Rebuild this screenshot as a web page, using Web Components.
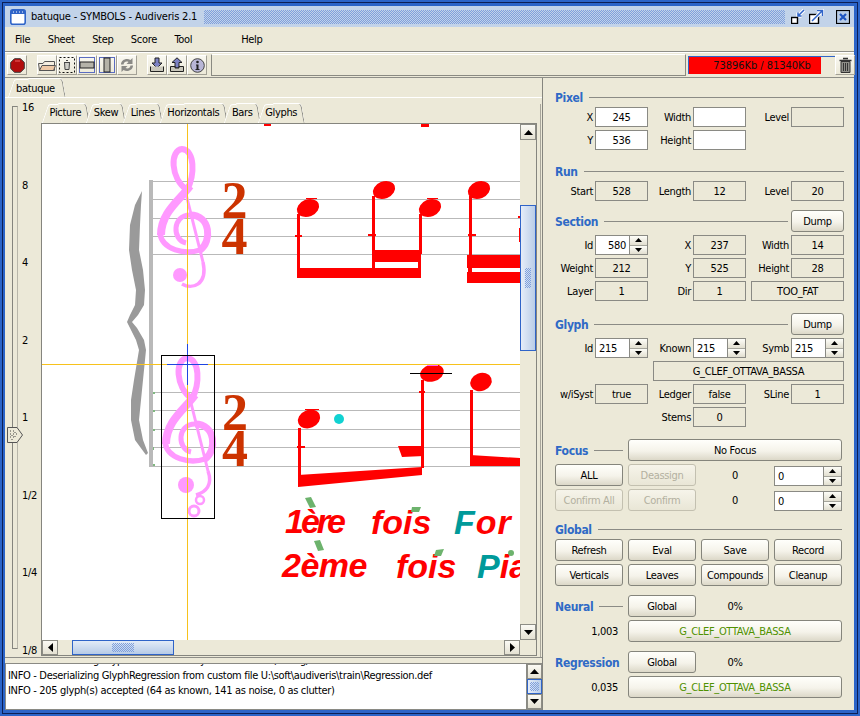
<!doctype html>
<html>
<head>
<meta charset="utf-8">
<title>batuque - SYMBOLS - Audiveris 2.1</title>
<style>
  html, body { margin: 0; height: 100%; overflow: hidden; }
  body { font: 11px "DejaVu Sans Condensed", "DejaVu Sans", sans-serif; font-stretch: condensed; letter-spacing: -0.33px; color: #000; }
</style>
</head>
<body>
<aud-window></aud-window>

<script>
/* Audiveris main window, Swing/XP look. Everything is a small custom element. */

const CHECKER = `conic-gradient(#7f9fdc 25%, transparent 0 50%, #7f9fdc 0 75%, transparent 0)`;

function define(name, css, html) {
  customElements.define(name, class extends HTMLElement {
    constructor() {
      super();
      this.attachShadow({ mode: "open" }).innerHTML = `<style>${css}</style>${html}`;
    }
  });
}

/* ---- small atoms ---- */

define("aud-label", `
  :host { display: flex; align-items: center; justify-content: flex-end; padding-right: 2px; white-space: nowrap; }
`, `<slot></slot>`);

define("aud-field", `
  :host { display: flex; align-items: center; justify-content: center; height: 20px;
    box-sizing: border-box; border: 1px solid #8a8a84; white-space: nowrap; }
  :host([edit]) { background: #fff; }
`, `<slot></slot>`);

define("aud-spin", `
  :host { display: flex; height: 20px; box-sizing: border-box; border: 1px solid #8a8a84; background: #fff; }
  .v { flex: 1; display: flex; align-items: center; padding: 0 3px; }
  :host([right]) .v { justify-content: flex-end; }
  .b { width: 17px; display: flex; flex-direction: column; border-left: 1px solid #8a8a84; }
  .b i { flex: 1; display: flex; align-items: center; justify-content: center;
    background: linear-gradient(#fdfdf8, #e2dfd0); }
  .b i + i { border-top: 1px solid #a5a59c; }
  svg { display: block; }
`, `<div class="v"><slot></slot></div>
  <div class="b">
    <i><svg width="7" height="4"><path d="M3.5 0L7 4H0z"/></svg></i>
    <i><svg width="7" height="4"><path d="M0 0H7L3.5 4z"/></svg></i>
  </div>`);

define("aud-btn", `
  :host { display: flex; align-items: center; justify-content: center; height: 22px; box-sizing: border-box;
    border: 1px solid #85857c; border-radius: 3px; white-space: nowrap;
    background: linear-gradient(#fffffb 0%, #f5f3ea 55%, #dcd8c8 100%); }
  :host([off]) { color: #b3b09f; border-color: #c3c0b0; background: linear-gradient(#f6f4ea, #e9e6d6); }
  :host([guess]) { color: #4f9100; }
`, `<slot></slot>`);

define("aud-title", `
  :host { display: flex; align-items: center; gap: 6px; min-height: 20px; white-space: nowrap;
    color: #2f6ac6; font-weight: bold; font-size: 12px; }
  span { padding-top: 2px; }
  i { flex: 1; height: 1px; background: #8b8b85; }
  :host([bare]) i { display: none; }
`, `<span><slot></slot></span><i></i>`);

/* ---- scrollbars ---- */

const ARROWS = {
  v: ['<svg width="9" height="5"><path d="M4.5 0L9 5H0z"/></svg>', '<svg width="9" height="5"><path d="M0 0H9L4.5 5z"/></svg>'],
  h: ['<svg width="5" height="9"><path d="M5 0V9L0 4.500z"/></svg>', '<svg width="5" height="9"><path d="M0 0L5 4.500 0 9z"/></svg>'],
};

customElements.define("aud-scrollbar", class extends HTMLElement {
  constructor() {
    super();
    const [a, b] = ARROWS[this.getAttribute("orient")];
    this.attachShadow({ mode: "open" }).innerHTML = `<style>
      :host { display: flex; background: #ece9d8; box-sizing: border-box; }
      :host([orient="v"]) { flex-direction: column; }
      .btn { flex: none; display: flex; align-items: center; justify-content: center;
        box-sizing: border-box; border: 1px solid #8d8d85;
        background: linear-gradient(#fbfaf4, #e4e1d2); }
      :host([orient="v"]) .btn { height: var(--btn, 16px); }
      :host([orient="h"]) .btn { width: 16px; }
      .pad { flex: none; flex-basis: var(--before, 0); }
      .rest { flex: 1; }
      .thumb { flex: none; flex-basis: var(--thumb, 20px); box-sizing: border-box; border: 1px solid #2f64c8;
        display: flex; align-items: center; justify-content: center;
        background: linear-gradient(90deg, #e6edf8, #b9cde8); }
      :host([orient="h"]) .thumb { background: linear-gradient(#e3ebf7, #b6cbe7); }
      .dots { background-image: ${CHECKER}; background-size: 2px 2px; }
      :host([orient="h"]) .dots { width: 22px; height: 9px; }
      :host([orient="v"]) .dots { width: 6px; height: 20px; }
      :host([small]) .dots { width: 9px; height: 9px; }
      svg { display: block; }
    </style>
    <div class="btn">${a}</div><div class="pad"></div>
    <div class="thumb"><div class="dots"></div></div>
    <div class="rest"></div><div class="btn">${b}</div>`;
  }
});

/* ---- title bar ---- */

define("aud-titlebar", `
  :host { display: flex; align-items: center; height: 21px; background: #c2d3e9; padding: 0 4px 0 5px; }
  .ico { margin-right: 5px; display: block; }
  .txt { white-space: nowrap; letter-spacing: -0.2px; }
  .dither { flex: 1; height: 14px; margin: 0 6px 0 7px; background-image: ${CHECKER}; background-size: 2px 2px; }
  .ctl { display: flex; align-items: center; }
  svg { display: block; }
`, `
  <svg class="ico" width="16" height="16" viewBox="0 0 16 16">
    <rect x="0.800" y="0.800" width="14.400" height="14.400" rx="2" fill="#fff" stroke="#2f64c8" stroke-width="1.600"/>
    <rect x="1" y="1" width="14" height="4" fill="#2f64c8"/>
    <path d="M3 3h1M6 3h1M9 3h1M12 3h1" stroke="#fff"/>
  </svg>
  <span class="txt">batuque - SYMBOLS - Audiveris 2.1</span>
  <div class="dither"></div>
  <div class="ctl">
    <svg width="14" height="15" viewBox="0 0 14 15">
      <path d="M13 1L7 7M7 3.500V7H10.500" fill="none" stroke="#fff" stroke-width="3.500"/>
      <path d="M13 1L7 7M7 3.500V7H10.500" fill="none" stroke="#2f64c8" stroke-width="1.500"/>
      <rect x="0.500" y="8.500" width="6" height="6" fill="#fff" stroke="#000" stroke-width="1.400"/>
    </svg>
    <svg style="margin-left:4px" width="15" height="15" viewBox="0 0 15 15">
      <rect x="0.500" y="5.500" width="9" height="9" fill="#fff" stroke="#000" stroke-width="1.400"/>
      <path d="M3 12L13 2M8 1.500H13.500V7" fill="none" stroke="#fff" stroke-width="3.500"/>
      <path d="M3 12L13 2M8 1.500H13.500V7" fill="none" stroke="#2f64c8" stroke-width="1.500"/>
    </svg>
    <svg style="margin-left:12px" width="14" height="14" viewBox="0 0 14 14">
      <rect x="0.500" y="0.500" width="13" height="13" fill="#b8cce6" stroke="#000" stroke-width="1.200"/>
      <path d="M4 4L10 10M10 4L4 10" stroke="#1f55c0" stroke-width="2.200"/>
    </svg>
  </div>`);

/* ---- menu bar ---- */

define("aud-menubar", `
  :host { display: flex; align-items: center; height: 25px; box-sizing: border-box; background: #ece9d8;
    border-bottom: 1px solid #8e8e88; padding-left: 10px; }
  span { margin-right: 17.500px; }
  .help { margin-left: 31.500px; }
`, `<span>File</span><span>Sheet</span><span>Step</span><span>Score</span><span>Tool</span><span class="help">Help</span>`);

/* ---- tool bar ---- */

define("aud-toolbtn", `
  :host { display: flex; flex: none; align-items: center; justify-content: center; width: 20px; height: 20px; box-sizing: border-box;
    background: linear-gradient(#f9f8f1, #ece9d8); border: 1px solid; border-color: #fff #a3a196 #a3a196 #fff; }
  ::slotted(svg) { display: block; }
`, `<slot></slot>`);

define("aud-memory", `
  :host { flex: none; width: 147px; height: 18px; box-sizing: border-box; display: block; position: relative;
    border: solid #2f64c8; border-width: 1px 0 0 1px; background: #ece9d8; }
  .fill { height: 100%; width: 132px; background: #ff0000; }
  .txt { position: absolute; inset: 0; display: flex; align-items: center; justify-content: center; color: #111; letter-spacing: -0.05px; }
`, `<div class="fill"></div><div class="txt">73896Kb / 81340Kb</div>`);

define("aud-toolbar", `
  :host { display: flex; align-items: center; height: 24px; background: #ece9d8; padding-left: 2px;
    border-bottom: 1px solid #8e8e88; border-top: 1px solid #fff; }
  .g { display: flex; }
  .blank { flex: 1; height: 22px; margin: 0 2px 0 4px; box-sizing: border-box; border: 1px solid;
    border-color: #fff #8a8a82 #8a8a82 #8a8a82; }
`, `
  <div class="g">
    <aud-toolbtn><svg width="15" height="15" viewBox="0 0 15 15"><path d="M4.500 0.700H10.500L14.300 4.500V10.500L10.500 14.300H4.500L0.700 10.500V4.500z" fill="#b30d0d" stroke="#3a3a3a"/><path d="M5 3H10" stroke="#e66" /></svg></aud-toolbtn>
  </div>
  <div class="g" style="margin-left:10px">
    <aud-toolbtn><svg width="18" height="14" viewBox="0 0 18 14"><path d="M1.500 12.500L0.500 5.500H5L6.500 3.500H16.500V12.500z" fill="#f5eee0" stroke="#555"/><path d="M1.500 12.500L4 7.500H17.500L15.500 12.500z" fill="#efc9a6" stroke="#555"/></svg></aud-toolbtn>
    <aud-toolbtn><svg width="16" height="16" viewBox="0 0 16 16"><rect x="0.500" y="0.500" width="15" height="15" fill="none" stroke="#111" stroke-dasharray="2 2"/><path d="M5 5.500H11M5.500 5.500L6 12.500H10L10.500 5.500M7 3.500H9" fill="#cfcfc8" stroke="#444"/></svg></aud-toolbtn>
    <aud-toolbtn><svg width="16" height="16" viewBox="0 0 16 16"><rect x="0.500" y="0.500" width="15" height="15" fill="none" stroke="#5a6cc0"/><rect x="1" y="5" width="14" height="6" fill="#b5b3a8" stroke="#222"/></svg></aud-toolbtn>
    <aud-toolbtn><svg width="16" height="16" viewBox="0 0 16 16"><rect x="0.500" y="0.500" width="15" height="15" fill="none" stroke="#5a6cc0"/><rect x="5" y="1" width="6" height="14" fill="#b5b3a8" stroke="#222"/></svg></aud-toolbtn>
    <aud-toolbtn><svg width="16" height="16" viewBox="0 0 16 16"><path d="M2 7.500C2 3 7.500 0.500 11.500 3L13.500 1V7H7.500L9.500 5C7 3.800 5 5 4.500 7.500zM14 8.500C14 13 8.500 15.500 4.500 13L2.500 15V9H8.500L6.500 11C9 12.200 11 11 11.500 8.500z" fill="#8a8a86"/></svg></aud-toolbtn>
  </div>
  <div class="g" style="margin-left:10px">
    <aud-toolbtn><svg width="16" height="16" viewBox="0 0 16 16"><path d="M6 1H10V6H13L8 11 3 6H6z" fill="#7c82c4" stroke="#222"/><path d="M1.500 9.500V14.500H14.500V9.500" fill="#c9c7bb" stroke="#222"/></svg></aud-toolbtn>
    <aud-toolbtn><svg width="16" height="16" viewBox="0 0 16 16"><path d="M6 11V5.500H3L8 0.800 13 5.500H10V11z" fill="#7c82c4" stroke="#222"/><path d="M1.500 9.500V14.500H14.500V9.500H10V11H6V9.500z" fill="#c9c7bb" stroke="#222"/></svg></aud-toolbtn>
    <aud-toolbtn><svg width="15" height="15" viewBox="0 0 15 15"><circle cx="7.500" cy="7.500" r="6.800" fill="#b8b6d6" stroke="#444"/><circle cx="7.500" cy="4" r="1.300" fill="#222"/><path d="M6 6.500H8.500V11H9.500V12H5.500V11H6.500V7.500H6z" fill="#222"/></svg></aud-toolbtn>
  </div>
  <div class="blank"></div>
  <aud-memory></aud-memory>
  <aud-toolbtn style="margin-right:-1px"><svg width="13" height="16" viewBox="0 0 13 16"><path d="M4 1.500H9M0.500 3.500H12.500" stroke="#333" stroke-width="1.600"/><path d="M2 4.500H11V15.500H2z" fill="#8e8e88" stroke="#333"/><path d="M4.500 6V14M6.500 6V14M8.500 6V14" stroke="#333"/></svg></aud-toolbtn>
`);

/* ---- tabs with the slanted Metal shape ---- */

define("aud-tab", `
  :host { position: relative; display: flex; align-items: center; box-sizing: border-box; height: 18px; padding: 0 6px 0 6.500px;
    white-space: nowrap; z-index: 0; }
  :host::before, :host::after { content: ""; position: absolute; top: 0; bottom: 0; z-index: -1; background: #ece9d8; }
  :host::before { left: 2px; width: 50%; border: solid #fff; border-width: 1px 0 0 1px;
    transform: skewX(-19deg); border-top-left-radius: 3px; }
  :host::after { right: 0; width: 60%; border: solid #8e8e88; border-width: 0 1px 0 0;
    box-shadow: 0 -1px 0 #fff; transform: skewX(10deg); border-top-right-radius: 3px; }
  :host([inner]) { height: 19px; padding-bottom: 2px; }
  :host([top]) { padding: 0 9px 0 7px; }
`, `<slot></slot>`);

/* ---- zoom slider on the left of the score ---- */

define("aud-zoomslider", `
  :host { display: block; position: relative; box-sizing: border-box; width: 34px; height: 100%; }
  .track { position: absolute; left: 5px; top: 0; bottom: 0; width: 6px; box-sizing: border-box;
    border: 1px solid #85857e; background: #ece9d8; border-right-color: #b9b7aa; }
  .marks { position: absolute; left: 15px; top: -5px; bottom: -9px; display: flex; flex-direction: column;
    justify-content: space-between; }
  .marks span { display: block; height: 14px; line-height: 14px; }
  .knob { position: absolute; left: 0; top: 321px; display: block; }
`, `
  <div class="track"></div>
  <div class="marks"><span>16</span><span>8</span><span>4</span><span>2</span><span>1</span><span>1/2</span><span>1/4</span><span>1/8</span></div>
  <svg class="knob" width="16" height="16" viewBox="0 0 16 16">
    <path d="M0.500 0.500H10L15.500 8 10 15.500H0.500z" fill="#ece9d8" stroke="#555"/>
    <path d="M3 4h1M6 4h1M3 7h1M6 7h1M9 7h1M3 10h1M6 10h1M4.500 12.500h1M7.500 5.500h1M4.500 8.500h1M7.500 9.500h1" stroke="#444"/>
  </svg>`);

/* ---- score picture: a free canvas in screen coordinates ---- */

const CLEF = `
  <path d="M187 190C170 178 170 150 182 149C195 150 195 175 187 190" fill="none" stroke-width="6"/>
  <path d="M190 186C180 200 161 212 161 235" fill="none" stroke-width="8"/>
  <path d="M160 233C162 250 185 255 200 250" fill="none" stroke-width="5.500"/>
  <path d="M200 250C212 242 211 215 190 215" fill="none" stroke-width="7"/>
  <path d="M190 215C172 215 172 240 186 243" fill="none" stroke-width="5"/>
  <path d="M184 186L203 262" fill="none" stroke-width="3"/>`;

const STAVES = [181, 199, 218, 236, 254, 392, 410, 429, 447, 466]
  .map(y => `<rect x="152" y="${y}" width="368" height="1"/>`).join("");

define("aud-score", `
  :host { display: block; background: #fff; overflow: hidden; }
  svg { display: block; }
  text { font-family: "Liberation Sans", Arial, sans-serif; font-weight: bold; font-style: italic; font-size: 34px; fill: #ff0000; font-stretch: normal; }
  .t { fill: #009a9a; }
  .ts { font-family: "Liberation Serif", "Times New Roman", serif; font-style: normal; font-size: 52px; fill: #cc3300; }
`, `
<svg width="478" height="516" viewBox="42 124 478 516" letter-spacing="0">
  <g fill="#b9b9b9">${STAVES}<rect x="149" y="180" width="4" height="287"/></g>
  <path fill="#9a9a9a" d="M142 191L135 205 130 225 129 250 132 270 136 290 135 305 130 315 127 322 130 328 136 340 139 350 134 380 131 400 131 420 135 440 146 455 148 453 143 440 139 420 141 400 143 380 146 350 144 340 137 328 132 322 138 315 144 305 145 290 143 270 139 250 140 225 141 205z"/>

  <g stroke="#ff99ff" fill="#ff99ff">
    ${CLEF}
    <path d="M203 262C208 285 192 290 182 284" fill="none" stroke-width="3.500"/>
    <circle cx="180" cy="275" r="7" stroke="none"/>
    <g transform="translate(5 209)">${CLEF}</g>
    <path d="M208 471C213 485 206 492 196 495" fill="none" stroke-width="3.500"/>
    <circle cx="186" cy="485" r="8" stroke="none"/>
    <circle cx="200" cy="500" r="4" fill="none" stroke-width="2.500"/>
    <circle cx="194" cy="511" r="5" fill="none" stroke-width="3"/>
  </g>

  <text class="ts" x="234.500" y="218" text-anchor="middle">2</text>
  <text class="ts" x="234.500" y="254" text-anchor="middle">4</text>
  <text class="ts" x="235" y="430" text-anchor="middle">2</text>
  <text class="ts" x="235" y="466" text-anchor="middle">4</text>

  <g fill="#ff0000">
    <rect x="264" y="124" width="7" height="2"/><rect x="421" y="124" width="8" height="3"/>
    <!-- first staff -->
    <ellipse cx="308" cy="208" rx="11.500" ry="8.500" transform="rotate(-22 308 208)"/>
    <rect x="297" y="214" width="3" height="56"/><rect x="295" y="235" width="7" height="2"/>
    <rect x="306" y="198" width="11" height="1"/>
    <ellipse cx="384" cy="190" rx="11.500" ry="8.500" transform="rotate(-22 384 190)"/>
    <rect x="372" y="196" width="3" height="74"/><rect x="368" y="234" width="8" height="2"/>
    <ellipse cx="430" cy="208" rx="11.500" ry="8.500" transform="rotate(-22 430 208)"/>
    <rect x="419" y="214" width="3" height="40"/>
    <rect x="427" y="198" width="11" height="1"/>
    <rect x="297" y="268" width="124" height="10"/>
    <rect x="372" y="250" width="49" height="12"/><rect x="372" y="262" width="3" height="6"/><rect x="418" y="262" width="3" height="6"/>
    <ellipse cx="479" cy="190" rx="11.500" ry="8.500" transform="rotate(-22 479 190)"/>
    <rect x="469" y="196" width="3" height="60"/><rect x="468" y="234" width="8" height="2"/>
    <rect x="467" y="255" width="53" height="13"/><rect x="468" y="268" width="4" height="4"/><rect x="467" y="272" width="53" height="11"/>
    <rect x="518" y="216" width="2" height="2"/><rect x="519" y="228" width="1" height="14"/>
    <!-- second staff -->
    <ellipse cx="309" cy="419" rx="11.500" ry="9" transform="rotate(-22 309 419)"/>
    <rect x="298" y="428" width="3" height="50"/><rect x="297" y="446" width="8" height="2"/><rect x="305" y="409" width="14" height="1"/>
    <path d="M298 475L422 467V475L298 487z"/>
    <ellipse cx="432" cy="373" rx="12" ry="8.500" transform="rotate(-14 432 373)"/>
    <rect x="421" y="380" width="3" height="88"/>
    <rect x="419" y="391" width="6" height="2"/>
    <path d="M398 446H424V456L402 457z"/>
    <ellipse cx="481" cy="382" rx="11" ry="9" transform="rotate(-22 481 382)"/>
    <rect x="470" y="390" width="3" height="66"/>
    <path d="M470 455L520 458V466H470z"/>
  </g>
  <rect x="427" y="364" width="11" height="2" fill="#ff66ff"/>
  <rect x="410" y="373" width="42" height="1" fill="#000"/>
  <circle cx="339" cy="419" r="5" fill="#11d2d2"/>

  <g fill="#7fb87f">
    <rect x="153" y="392" width="2" height="2"/><rect x="153" y="410" width="2" height="2"/><rect x="153" y="429" width="2" height="2"/>
    <rect x="153" y="447" width="1" height="3"/><rect x="153" y="464" width="2" height="2"/>
  </g>

  <text x="285" y="533" letter-spacing="-3">1ère</text>
  <text x="371" y="534">fois</text>
  <text x="454" y="534" letter-spacing="1"><tspan class="t">F</tspan>or</text>
  <text x="282" y="577" font-size="36" letter-spacing="-0.500">2ème</text>
  <text x="396" y="578">fois</text>
  <text x="477" y="578"><tspan class="t">P</tspan>ia</text>
  <g fill="#6db36d">
    <path d="M305 498L311 497 316 507 310 508z"/><path d="M314 541L320 540 324 550 318 551z"/>
    <path d="M412 507H421L419 512H411z"/><path d="M436 550L444 549 441 556 434 556z"/>
    <circle cx="511" cy="553" r="3"/>
  </g>

  <path d="M42 364.500H520M187.500 124V640" stroke="#f7c21c" stroke-width="1" fill="none"/>
  <path d="M187.500 344V385M167 364.500H208" stroke="#1f45e0" fill="none"/>
  <rect x="161.500" y="355.500" width="53" height="163" fill="none" stroke="#000"/>
</svg>`);

/* ---- tabbed score area ---- */

define("aud-pane", `
  :host { display: grid; grid-template-columns: 478px 16px; grid-template-rows: 516px 15px;
    width: 496px; box-sizing: border-box; border: 1px solid #85857e; }
  .corner { background: #ece9d8; }
`, `
  <aud-score></aud-score>
  <aud-scrollbar orient="v" style="--before:65px;--thumb:146px;"></aud-scrollbar>
  <aud-scrollbar orient="h" style="--before:14px;--thumb:102px;"></aud-scrollbar>
  <div class="corner"></div>`);

define("aud-log", `
  :host { display: flex; height: 47px; box-sizing: border-box; background: #fff; border: 1px solid #8a8a84; border-right: 0; }
  .text { flex: 1; overflow: hidden; display: flex; flex-direction: column; justify-content: flex-end;
    padding: 0 0 11px 2px; white-space: nowrap; }
  .text div { height: 15px; line-height: 15px; flex: none; }
  aud-scrollbar { width: 16px; --before: 0px; --thumb: 15px; --btn: 15px; border-left: 1px solid #8a8a84; }
`, `
  <div class="text">
    <div>INFO - Deserializing GlyphNetwork from system resource /config/neural.def</div>
    <div>INFO - Deserializing GlyphRegression from custom file U:\\soft\\audiveris\\train\\Regression.def</div>
    <div>INFO - 205 glyph(s) accepted (64 as known, 141 as noise, 0 as clutter)</div>
  </div>
  <aud-scrollbar orient="v" small></aud-scrollbar>`);

define("aud-left", `
  :host { display: flex; flex-direction: column; width: 538px; box-sizing: border-box; border-right: 1px solid #85857e; }
  .outer-tabs { height: 20px; padding: 2px 0 0 4px; box-sizing: border-box; border-bottom: 1px solid #fff; display: flex; align-items: flex-end; }
  .body { display: grid; grid-template-columns: 34px 1fr; padding: 6px 0 0 2px; height: 560px; box-sizing: border-box;
    border-bottom: 1px solid #8e8e88; }
  .slider { height: 543px; margin-top: 2px; }
  .wrap { width: 499px; border-right: 1px solid #a8a69b; }
  .inner-tabs { height: 19px; box-sizing: border-box; display: flex; align-items: flex-end; padding-left: 2px; }
  .split { height: 5px; }
`, `
  <div class="outer-tabs"><aud-tab top>batuque</aud-tab></div>
  <div class="body">
    <aud-zoomslider class="slider"></aud-zoomslider>
    <div class="wrap">
      <div class="inner-tabs">
        <aud-tab inner>Picture</aud-tab><aud-tab inner>Skew</aud-tab><aud-tab inner>Lines</aud-tab><aud-tab inner>Horizontals</aud-tab><aud-tab inner>Bars</aud-tab><aud-tab inner>Glyphs</aud-tab>
      </div>
      <aud-pane></aud-pane>
    </div>
  </div>
  <div class="split"></div>
  <aud-log></aud-log>`);

/* ---- boards on the right ---- */

define("aud-boards", `
  :host { display: block; width: 311px; box-sizing: border-box; padding: 9px 0 0 12px; background: #ece9d8; }
  .g6 { display: grid; grid-template-columns: 40px 53px 45px 53px 45px 53px; row-gap: 3px;
    grid-auto-rows: 20px; width: 289px; }
  .g4 { display: grid; grid-template-columns: repeat(4, 68px); column-gap: 5px; row-gap: 3px; grid-auto-rows: 22px; width: 287px; }
  .head { display: grid; grid-template-columns: 1fr 53px; height: 22px; column-gap: 3px; width: 289px; margin-bottom: 3px; }
  .c { display: flex; align-items: center; justify-content: center; }
  .r { display: flex; align-items: center; justify-content: flex-end; padding-right: 5px; }
  .s3 { grid-column: span 3; }
  .g4 aud-spin { align-self: end; }
`, `
  <aud-title style="width:289px">Pixel</aud-title>
  <div class="g6">
    <aud-label>X</aud-label><aud-field edit>245</aud-field><aud-label>Width</aud-label><aud-field edit></aud-field><aud-label>Level</aud-label><aud-field></aud-field>
    <aud-label>Y</aud-label><aud-field edit>536</aud-field><aud-label>Height</aud-label><aud-field edit></aud-field>
  </div>

  <aud-title style="margin-top:11px;width:289px">Run</aud-title>
  <div class="g6">
    <aud-label>Start</aud-label><aud-field>528</aud-field><aud-label>Length</aud-label><aud-field>12</aud-field><aud-label>Level</aud-label><aud-field>20</aud-field>
  </div>

  <div class="head" style="margin-top:9px"><aud-title>Section</aud-title><aud-btn>Dump</aud-btn></div>
  <div class="g6">
    <aud-label>Id</aud-label><aud-spin right>580</aud-spin><aud-label>X</aud-label><aud-field>237</aud-field><aud-label>Width</aud-label><aud-field>14</aud-field>
    <aud-label>Weight</aud-label><aud-field>212</aud-field><aud-label>Y</aud-label><aud-field>525</aud-field><aud-label>Height</aud-label><aud-field>28</aud-field>
    <aud-label>Layer</aud-label><aud-field>1</aud-field><aud-label>Dir</aud-label><aud-field>1</aud-field><aud-field style="grid-column:5 / span 2;margin-left:5px">TOO_FAT</aud-field>
  </div>

  <div class="head" style="margin-top:12px"><aud-title>Glyph</aud-title><aud-btn>Dump</aud-btn></div>
  <div class="g6">
    <aud-label>Id</aud-label><aud-spin>215</aud-spin><aud-label>Known</aud-label><aud-spin>215</aud-spin><aud-label>Symb</aud-label><aud-spin>215</aud-spin>
    <aud-field style="grid-column:3 / span 4;margin-left:5px">G_CLEF_OTTAVA_BASSA</aud-field>
    <aud-label style="grid-column:1">w/iSyst</aud-label><aud-field>true</aud-field><aud-label>Ledger</aud-label><aud-field>false</aud-field><aud-label>SLine</aud-label><aud-field>1</aud-field>
    <aud-label style="grid-column:3">Stems</aud-label><aud-field>0</aud-field>
  </div>

  <div class="g4" style="margin-top:12px">
    <aud-title>Focus</aud-title><aud-btn class="s3">No Focus</aud-btn>
    <aud-btn>ALL</aud-btn><aud-btn off>Deassign</aud-btn><div class="c">0</div><aud-spin>0</aud-spin>
    <aud-btn off>Confirm All</aud-btn><aud-btn off>Confirm</aud-btn><div class="c">0</div><aud-spin>0</aud-spin>
  </div>

  <aud-title style="margin-top:8px;width:287px">Global</aud-title>
  <div class="g4">
    <aud-btn>Refresh</aud-btn><aud-btn>Eval</aud-btn><aud-btn>Save</aud-btn><aud-btn>Record</aud-btn>
    <aud-btn>Verticals</aud-btn><aud-btn>Leaves</aud-btn><aud-btn>Compounds</aud-btn><aud-btn>Cleanup</aud-btn>
  </div>

  <div class="g4" style="margin-top:9px">
    <aud-title>Neural</aud-title><aud-btn>Global</aud-btn><div class="c">0%</div><div></div>
    <div class="r">1,003</div><aud-btn guess class="s3">G_CLEF_OTTAVA_BASSA</aud-btn>
  </div>

  <div class="g4" style="margin-top:9px">
    <aud-title bare>Regression</aud-title><aud-btn>Global</aud-btn><div class="c">0%</div><div></div>
    <div class="r">0,035</div><aud-btn guess class="s3">G_CLEF_OTTAVA_BASSA</aud-btn>
  </div>`);

/* ---- the window ---- */

define("aud-window", `
  :host { display: block; width: 860px; height: 716px; box-sizing: border-box; padding: 6px 6px 5px 5px; background: #2b64c8;
    box-shadow: inset 0 0 0 2px #2b64c8, inset 0 0 0 3px #0c1f55; }
  .main { display: flex; height: 632px; background: #ece9d8; }
`, `
  <aud-titlebar></aud-titlebar>
  <aud-menubar></aud-menubar>
  <aud-toolbar></aud-toolbar>
  <div class="main">
    <aud-left></aud-left>
    <aud-boards></aud-boards>
  </div>`);
</script>
</body>
</html>
